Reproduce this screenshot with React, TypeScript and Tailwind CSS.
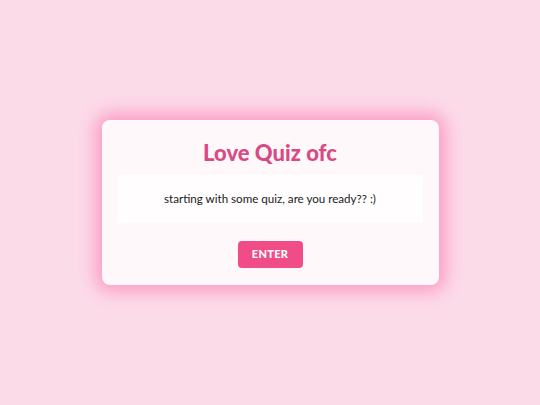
import React from "react";

export default function App() {
  return (
    <div className="w-[540px] h-[405px] bg-[#fcdbe9] flex items-center justify-center" style={{ fontFamily: 'Lato, "Open Sans", sans-serif' }}>
      <div className="w-[337px] h-[165px] mt-[-1px] bg-[#fff8fb] rounded-[8px] shadow-[0_0_18px_6px_rgba(251,130,180,0.75)] flex flex-col items-center px-[16px] pt-[16px]">
        <h1 className="h-[34px] leading-[34px] text-[22px] font-black text-[#d94a84]">Love Quiz ofc</h1>
        <div className="mt-[5px] w-full h-[48px] bg-[#fffdfe] flex items-center justify-center text-[11.6px] text-[#1a1a1a]">
          starting with some quiz, are you ready?? :)
        </div>
        <button className="mt-[18px] w-[65px] h-[27px] rounded-[4px] bg-[#f04d88] text-white text-[11px] font-black tracking-[0.3px]">ENTER</button>
      </div>
    </div>
  );
}
